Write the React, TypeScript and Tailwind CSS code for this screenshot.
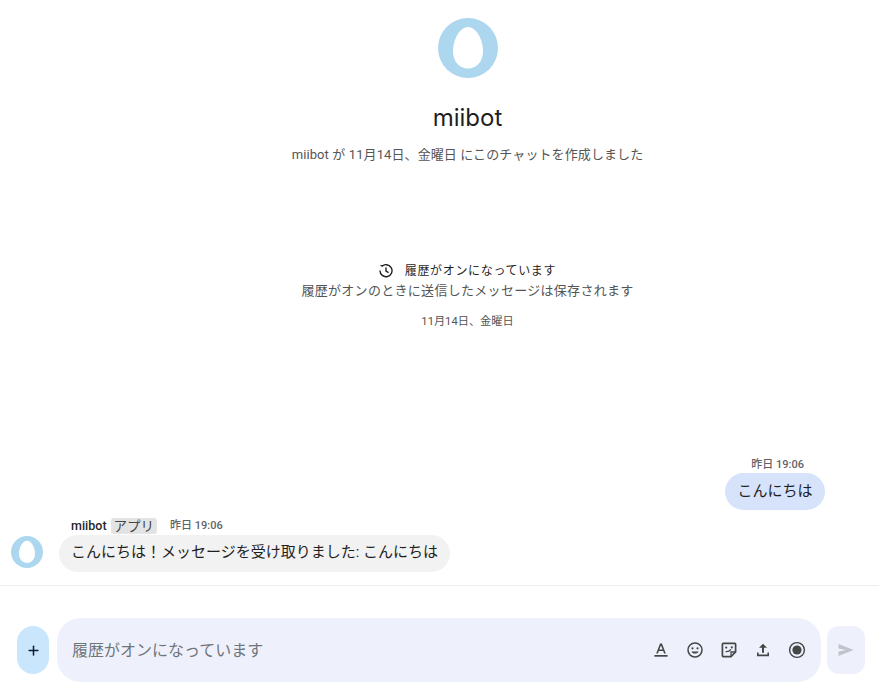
import React from 'react';
import { Plus } from 'lucide-react';

const FONT = 'font-["Roboto","Noto_Sans_CJK_JP",sans-serif]';

const EggAvatar = ({ size }: { size: number }) => (
  <svg width={size} height={size} viewBox="0 0 60 60" className="shrink-0">
    <circle cx="30" cy="30" r="30" fill="#acd7ee" />
    <path d="M30 9 C38 9 45 21 45 33.5 C45 44 38 50.5 30 50.5 C22 50.5 15 44 15 33.5 C15 21 22 9 30 9 Z" fill="#fff" />
  </svg>
);

const HistoryIcon = () => (
  <svg width="14" height="14" viewBox="0 0 14 14" fill="none" stroke="#1f1f1f" strokeWidth="1.4">
    <path d="M2.6 2.6 A6 6 0 1 1 1 6.6" />
    <path d="M7 3.6 V7.2 L9.6 8.6" />
    <path d="M1.4 1.6 H4.2" strokeWidth="1" />
  </svg>
);

const FormatIcon = () => (
  <svg width="18" height="18" viewBox="0 0 18 18" fill="#444746">
    <path d="M8 2.5 H10 L13.8 12.4 H12.1 L11.2 10 H6.8 L5.9 12.4 H4.2 Z M7.3 8.6 H10.7 L9 4.4 Z" />
    <rect x="2.4" y="14" width="13.2" height="1.7" />
  </svg>
);

const EmojiIcon = () => (
  <svg width="18" height="18" viewBox="0 0 18 18" fill="none" stroke="#444746" strokeWidth="1.5">
    <circle cx="9" cy="9" r="7" />
    <circle cx="6.5" cy="7.3" r="1.1" fill="#444746" stroke="none" />
    <circle cx="11.5" cy="7.3" r="1.1" fill="#444746" stroke="none" />
    <path d="M5.4 10.4 C6.4 13.2 11.6 13.2 12.6 10.4 Z" fill="#444746" stroke="none" />
  </svg>
);

const StickerIcon = () => (
  <svg width="18" height="18" viewBox="0 0 18 18" fill="none" stroke="#444746" strokeWidth="1.7">
    <path d="M3.2 2.4 H14.8 A0.8 0.8 0 0 1 15.6 3.2 V11 L11 15.6 H3.2 A0.8 0.8 0 0 1 2.4 14.8 V3.2 A0.8 0.8 0 0 1 3.2 2.4 Z" />
    <path d="M11 15 V11 H15" strokeWidth="1.3" />
    <circle cx="6.2" cy="6.6" r="1.1" fill="#444746" stroke="none" />
    <circle cx="11.8" cy="6.4" r="1.1" fill="#444746" stroke="none" />
    <path d="M5.6 10.6 C7.6 11 9.6 10 11 8.4" strokeWidth="1.3" />
  </svg>
);

const UploadIcon = () => (
  <svg width="18" height="18" viewBox="0 0 18 18" fill="#444746">
    <path d="M9 2.8 L13 6.8 H10 V11.8 H8 V6.8 H5 Z" />
    <path d="M3 11.5 H4.6 V13.6 H13.4 V11.5 H15 V15.2 H3 Z" />
  </svg>
);

const RecordIcon = () => (
  <svg width="18" height="18" viewBox="0 0 18 18">
    <circle cx="9" cy="9" r="7.4" fill="none" stroke="#444746" strokeWidth="1.4" />
    <circle cx="9" cy="9" r="4.6" fill="#444746" />
  </svg>
);

const SendIcon = () => (
  <svg width="16" height="14" viewBox="0 0 16 14" fill="#c0c3ca">
    <path d="M0.5 1 L15.5 7 L0.5 13 V8.4 L8 7 L0.5 5.6 Z" />
  </svg>
);

export default function App() {
  return (
    <div className={`${FONT} flex h-[688px] w-[879px] flex-col overflow-hidden bg-white text-[#1f1f1f]`}>
      <main className="flex h-[586px] flex-col border-b border-[#eeeeee]">
        {/* chat intro */}
        <section className="flex flex-col items-center pl-[56px] pt-[18px]">
          <EggAvatar size={60} />
          <h1 className='mt-[26px] h-[28px] font-["Inter",sans-serif] text-[24px] leading-[28px]'>miibot</h1>
          <p className="mt-[15px] h-[16px] text-[13px] leading-[16px] tracking-[0.1px] text-[#555]">
            miibot が 11月14日、金曜日 にこのチャットを作成しました
          </p>
        </section>

        <section className="mt-[98px] flex flex-col items-center pl-[56px]">
          <div className="flex h-[20px] items-center gap-[12px] text-[12px] leading-[20px] tracking-[0.67px]">
            <HistoryIcon />
            <span>履歴がオンになっています</span>
          </div>
          <p className="h-[20px] text-[13px] leading-[20px] tracking-[0.3px] text-[#555]">
            履歴がオンのときに送信したメッセージは保存されます
          </p>
          <p className="mt-[11px] h-[20px] text-[11.2px] leading-[20px] text-[#555]">11月14日、金曜日</p>
        </section>

        {/* messages */}
        <section className="mt-auto flex flex-col pb-[13px]">
          <div className="flex flex-col items-end pr-[54px]">
            <div className="mr-[21px] h-[16px] text-[11px] font-medium leading-[16px] text-[#5f6368]">昨日 19:06</div>
            <div className="rounded-[18.5px] bg-[#d6e3fb] px-[12.5px] py-[8px] text-[15px] leading-[21px]">
              こんにちは
            </div>
          </div>

          <div className="mt-[7px] flex items-end pl-[11px]">
            <div className="mb-[4px]">
              <EggAvatar size={32} />
            </div>
            <div className="ml-[16px]">
              <div className="ml-[12px] flex h-[17px] items-center text-[12.5px] font-medium leading-[16px] text-[#1f1f1f]">
                <span>miibot</span>
                <span className="ml-[4px] rounded-[3px] bg-[#e3e3e3] px-[3px] text-[13.5px] font-normal leading-[16px] text-[#444746]">
                  アプリ
                </span>
                <span className="ml-[13px] text-[11px] text-[#5f6368]">昨日 19:06</span>
              </div>
              <div className="mt-[1px] w-fit rounded-[18.5px] bg-[#f2f2f2] px-[12px] pb-[9px] pt-[7px] text-[15px] leading-[21px]">
                こんにちは！メッセージを受け取りました: こんにちは
              </div>
            </div>
          </div>
        </section>
      </main>

      {/* composer */}
      <footer className="flex items-center pl-[17px] pt-[32px]">
        <button className="flex h-[48px] w-[32px] items-center justify-center rounded-[16px] bg-[#c9e6fd] text-[#0f1f30]">
          <Plus size={15} strokeWidth={2.4} />
        </button>
        <div className="ml-[8px] flex h-[64px] w-[764px] items-center rounded-[24px] bg-[#eef1fb] pl-[15px] pr-[15px]">
          <span className="flex-1 pt-[1px] text-[16px] text-[#70757a]">履歴がオンになっています</span>
          <div className="flex items-center gap-[16px]">
            <FormatIcon />
            <EmojiIcon />
            <StickerIcon />
            <UploadIcon />
            <RecordIcon />
          </div>
        </div>
        <button className="ml-[6px] flex h-[48px] w-[38px] items-center justify-center rounded-[12px] bg-[#eef1fb]">
          <SendIcon />
        </button>
      </footer>
    </div>
  );
}
